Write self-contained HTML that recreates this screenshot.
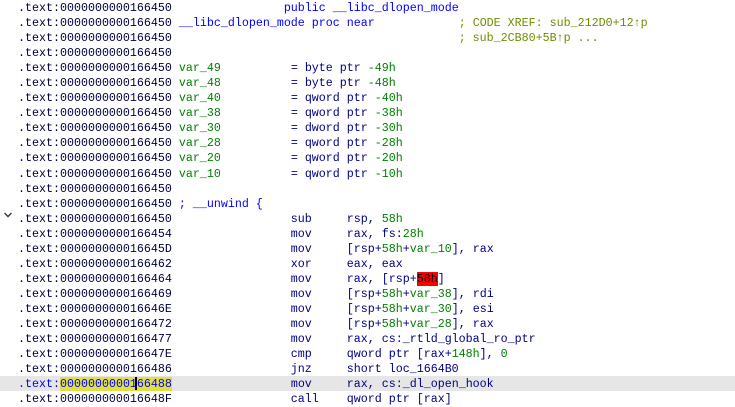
<!DOCTYPE html>
<html><head><meta charset="utf-8"><style>
body{margin:0;background:#fff;width:735px;height:407px;overflow:hidden;position:relative}
pre{margin:0;position:absolute;left:18px;top:1px;font-family:"Liberation Mono",monospace;font-size:11.67px;line-height:15.04px;color:#000080}
.a{color:#000040}
.g{color:#008000}
.b{color:#0000ff}
.n{color:#008000}
.c{color:#6b8e00}
.hl{position:absolute;left:0;top:376px;width:735px;height:15px;background:#e6e6e6}
.y{background:#e0e040}
.r{background:#ff0000;color:#000}
.chev{position:absolute;left:3px;top:211px}
.cur{position:absolute;left:135px;top:377px;width:2px;height:13px;background:#000}
</style></head><body>
<div class="hl"></div>
<svg class="chev" width="10" height="8" viewBox="0 0 10 8"><path d="M1.5 2 L5 5.5 L8.5 2" fill="none" stroke="#333" stroke-width="1.4"/></svg>
<pre><span class="a">.text:0000000000166450</span>                <span class="b">public __libc_dlopen_mode</span>
<span class="a">.text:0000000000166450</span> <span class="b">__libc_dlopen_mode proc near</span>            <span class="c">; CODE XREF: sub_212D0+12↑p</span>
<span class="a">.text:0000000000166450</span>                                         <span class="c">; sub_2CB80+5B↑p ...</span>
<span class="a">.text:0000000000166450</span>
<span class="a">.text:0000000000166450</span> <span class="g">var_49</span>          = byte ptr <span class="n">-49h</span>
<span class="a">.text:0000000000166450</span> <span class="g">var_48</span>          = byte ptr <span class="n">-48h</span>
<span class="a">.text:0000000000166450</span> <span class="g">var_40</span>          = qword ptr <span class="n">-40h</span>
<span class="a">.text:0000000000166450</span> <span class="g">var_38</span>          = qword ptr <span class="n">-38h</span>
<span class="a">.text:0000000000166450</span> <span class="g">var_30</span>          = dword ptr <span class="n">-30h</span>
<span class="a">.text:0000000000166450</span> <span class="g">var_28</span>          = qword ptr <span class="n">-28h</span>
<span class="a">.text:0000000000166450</span> <span class="g">var_20</span>          = qword ptr <span class="n">-20h</span>
<span class="a">.text:0000000000166450</span> <span class="g">var_10</span>          = qword ptr <span class="n">-10h</span>
<span class="a">.text:0000000000166450</span>
<span class="a">.text:0000000000166450</span> <span class="b">; __unwind {</span>
<span class="a">.text:0000000000166450</span>                 sub     rsp, <span class="n">58h</span>
<span class="a">.text:0000000000166454</span>                 mov     rax, fs:<span class="n">28h</span>
<span class="a">.text:000000000016645D</span>                 mov     [rsp+<span class="n">58h</span>+<span class="g">var_10</span>], rax
<span class="a">.text:0000000000166462</span>                 xor     eax, eax
<span class="a">.text:0000000000166464</span>                 mov     rax, [rsp+<span class="r">58h</span>]
<span class="a">.text:0000000000166469</span>                 mov     [rsp+<span class="n">58h</span>+<span class="g">var_38</span>], rdi
<span class="a">.text:000000000016646E</span>                 mov     [rsp+<span class="n">58h</span>+<span class="g">var_30</span>], esi
<span class="a">.text:0000000000166472</span>                 mov     [rsp+<span class="n">58h</span>+<span class="g">var_28</span>], rax
<span class="a">.text:0000000000166477</span>                 mov     rax, cs:_rtld_global_ro_ptr
<span class="a">.text:000000000016647E</span>                 cmp     qword ptr [rax+<span class="n">148h</span>], <span class="n">0</span>
<span class="a">.text:0000000000166486</span>                 jnz     short loc_1664B0
<span class="b">.text:<span class="y">0000000000166488</span></span>                 mov     rax, cs:_dl_open_hook
<span class="a">.text:000000000016648F</span>                 call    qword ptr [rax]</pre>
<div class="cur"></div>
</body></html>
